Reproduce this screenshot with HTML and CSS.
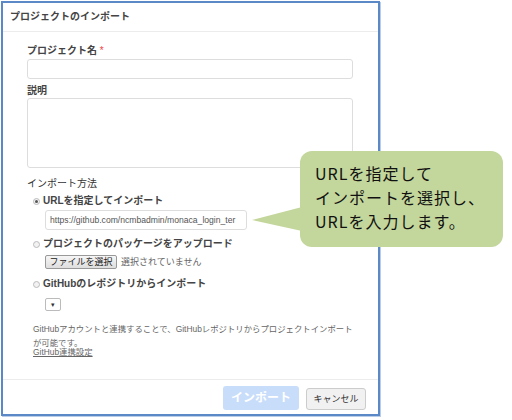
FILE: index.html
```html
<!DOCTYPE html>
<html lang="ja">
<head>
<meta charset="utf-8">
<link rel="stylesheet" href="styles.css">
</head>
<body>
<div class="stage">
  <div class="dialog">
    <div class="dlg-head">プロジェクトのインポート</div>
    <div class="dlg-body">
      <div class="label">プロジェクト名 <span class="req">*</span></div>
      <div class="field"></div>
      <div class="label label-2">説明</div>
      <div class="area"></div>
      <div class="label label-3">インポート方法</div>
      <div class="opt"><span class="radio on"></span>URLを指定してインポート</div>
      <div class="url">https://github.com/ncmbadmin/monaca_login_ter</div>
      <div class="opt opt-2"><span class="radio"></span>プロジェクトのパッケージをアップロード</div>
      <div class="file-row"><span class="file-btn">ファイルを選択</span><span class="file-none">選択されていません</span></div>
      <div class="opt opt-3"><span class="radio"></span>GitHubのレポジトリからインポート</div>
      <div class="select">▾</div>
      <p class="help">GitHubアカウントと連携することで、GitHubレポジトリからプロジェクトインポート<br>が可能です。</p>
      <a class="link">GitHub連携設定</a>
    </div>
    <div class="dlg-foot">
      <span class="btn-primary">インポート</span>
      <span class="btn-cancel">キャンセル</span>
    </div>
  </div>
  <div class="callout">
    <div class="callout-text">URLを指定して<br>インポートを選択し、<br>URLを入力します。</div>
  </div>
</div>
</body>
</html>
```

FILE: styles.css
```css
* { box-sizing: border-box; }
html, body { margin: 0; padding: 0; background: #fff; }
body {
  font-family: "Liberation Sans", "Noto Sans CJK JP", sans-serif;
  color: #333;
}
.stage {
  position: relative;
  width: 512px;
  height: 420px;
  padding: 1px 0 0 1px;
}
.dialog {
  width: 379px;
  height: 415px;
  border: 2px solid #5b88c6;
  box-shadow: 1px 1px 0 #b9cde9;
  display: flex;
  flex-direction: column;
  background: #fff;
}
.dlg-head {
  height: 29px;
  line-height: 28px;
  padding-left: 7px;
  font-size: 10px;
  font-weight: bold;
  color: #444;
  border-bottom: 1px solid #ececec;
}
.dlg-body {
  flex: 1;
  padding: 12px 25px 0 24px;
  display: flex;
  flex-direction: column;
  align-items: flex-start;
}
.label {
  font-size: 10px;
  font-weight: bold;
  line-height: 14px;
  height: 14px;
  color: #444;
  margin-bottom: 1px;
}
.req { color: #e44; font-weight: normal; }
.field {
  width: 100%;
  height: 20px;
  border: 1px solid #ddd;
  border-radius: 3px;
}
.label-2 { margin-top: 5px; margin-bottom: 0; }
.area {
  width: 100%;
  height: 70px;
  border: 1px solid #ddd;
  border-radius: 3px;
}
.label-3 { margin-top: 9px; margin-bottom: 0; font-weight: normal; color: #333; }
.opt {
  display: flex;
  align-items: center;
  margin-top: 3px;
  margin-left: 6px;
  font-size: 10px;
  font-weight: bold;
  line-height: 14px;
  height: 14px;
  color: #444;
}
.radio {
  width: 7px;
  height: 7px;
  border-radius: 50%;
  border: 1px solid #bbb;
  background: #f2f2f2;
  margin-right: 3px;
  display: inline-block;
  position: relative;
}
.radio.on::after {
  content: "";
  position: absolute;
  left: 1px;
  top: 1px;
  width: 3px;
  height: 3px;
  border-radius: 50%;
  background: #555;
}
.url {
  margin-top: 2px;
  margin-left: 18px;
  width: 202px;
  height: 20px;
  border: 1px solid #ddd;
  border-radius: 3px;
  padding-left: 4px;
  font-size: 8.6px;
  line-height: 18px;
  color: #555;
  white-space: nowrap;
  overflow: hidden;
}
.opt-2 { margin-top: 7px; }
.file-row {
  margin-top: 4px;
  margin-left: 18px;
  display: flex;
  align-items: center;
  font-size: 9px;
  height: 14px;
}
.file-btn {
  width: 72px;
  height: 14px;
  line-height: 12px;
  text-align: center;
  border: 1px solid #999;
  border-radius: 2px;
  background: linear-gradient(#f6f6f6, #dedede);
  color: #222;
}
.file-none { margin-left: 4px; color: #666; line-height: 14px; }
.opt-3 { margin-top: 8px; }
.select {
  margin-top: 7px;
  margin-left: 18px;
  width: 16px;
  height: 13px;
  border: 1px solid #bbb;
  border-radius: 2px;
  font-size: 7px;
  line-height: 11px;
  text-align: center;
  color: #333;
}
.help {
  margin: 11px 0 0 6px;
  font-size: 8.4px;
  line-height: 14px;
  color: #666;
  white-space: nowrap;
}
.link {
  margin: -4px 0 0 6px;
  font-size: 8.4px;
  line-height: 12px;
  color: #666;
  text-decoration: underline;
}
.dlg-foot {
  height: 35px;
  border-top: 1px solid #ececec;
  display: flex;
  justify-content: flex-end;
  align-items: flex-end;
  gap: 7px;
  padding: 0 12px 4px 0;
}
.btn-primary {
  width: 76px;
  height: 24px;
  line-height: 24px;
  text-align: center;
  background: #c8ddfa;
  color: #fff;
  font-weight: bold;
  font-size: 12px;
  border-radius: 3px;
}
.btn-cancel {
  width: 60px;
  height: 22px;
  line-height: 20px;
  text-align: center;
  background: #f1f1f1;
  border: 1px solid #ccc;
  border-radius: 3px;
  font-size: 9px;
  color: #333;
}
.callout {
  position: absolute;
  left: 300px;
  top: 151px;
  width: 203px;
  height: 96px;
  background: #c3d69b;
  border-radius: 12px;
}
.callout::before {
  content: "";
  position: absolute;
  left: -48px;
  top: 56px;
  width: 50px;
  height: 24px;
  background: #c3d69b;
  clip-path: polygon(0 54%, 100% 0, 100% 100%);
}
.callout-text {
  position: relative;
  padding: 10px 0 0 15px;
  font-family: "Noto Sans CJK JP", sans-serif;
  font-size: 16px;
  line-height: 24px;
  letter-spacing: 1px;
  color: #111;
  white-space: nowrap;
}
```
